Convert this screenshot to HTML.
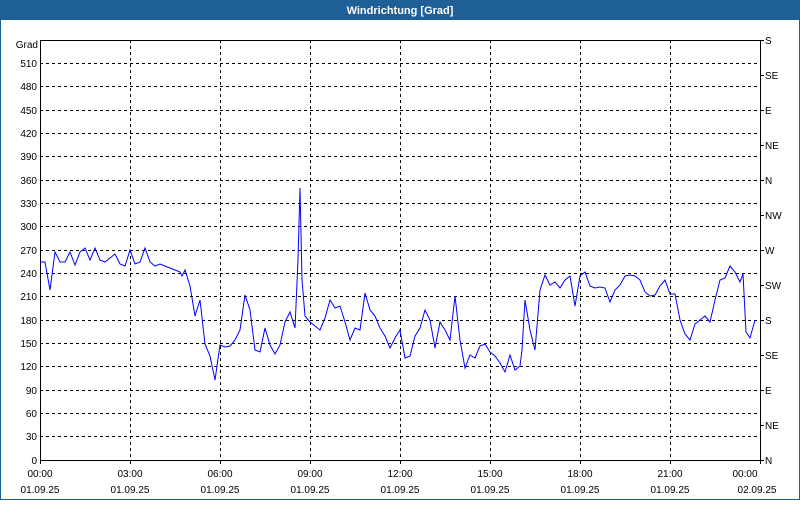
<!DOCTYPE html>
<html><head><meta charset="utf-8"><style>
body{margin:0;width:800px;height:500px;overflow:hidden;background:#fff;font-family:"Liberation Sans",sans-serif}
</style></head><body>
<svg width="800" height="500" xmlns="http://www.w3.org/2000/svg" font-family="Liberation Sans, sans-serif" font-size="10">
<rect x="0" y="0" width="800" height="500" fill="#fff"/>
<rect x="0" y="0" width="800" height="20" fill="#1e6096"/>
<rect x="0.5" y="0.5" width="799" height="499" fill="none" stroke="#1e6096" stroke-width="1"/>
<text x="400" y="14" fill="#fff" font-weight="bold" font-size="11" text-anchor="middle">Windrichtung [Grad]</text>
<g stroke="#000" stroke-dasharray="3,3" stroke-width="1">
<path d="M40 63.5H760M40 86.5H760M40 110.5H760M40 133.5H760M40 156.5H760M40 180.5H760M40 203.5H760M40 226.5H760M40 250.5H760M40 273.5H760M40 296.5H760M40 320.5H760M40 343.5H760M40 366.5H760M40 390.5H760M40 413.5H760M40 436.5H760"/>
<path d="M130.5 40V460M220.5 40V460M310.5 40V460M400.5 40V460M490.5 40V460M580.5 40V460M670.5 40V460"/>
</g>
<rect x="40.5" y="40.5" width="720" height="420" fill="none" stroke="#000"/>
<g stroke="#000"><path d="M130.5 460V464M220.5 460V464M310.5 460V464M400.5 460V464M490.5 460V464M580.5 460V464M670.5 460V464M40.5 460V464M760.5 460V464"/>
<path d="M760 40.5h4M760 75.5h4M760 110.5h4M760 145.5h4M760 180.5h4M760 215.5h4M760 250.5h4M760 285.5h4M760 320.5h4M760 355.5h4M760 390.5h4M760 425.5h4M760 460.5h4"/></g>
<g text-anchor="end">
<text x="38" y="48">Grad</text>
<text x="37" y="67">510</text><text x="37" y="90">480</text><text x="37" y="114">450</text><text x="37" y="137">420</text><text x="37" y="160">390</text><text x="37" y="184">360</text><text x="37" y="207">330</text><text x="37" y="230">300</text><text x="37" y="254">270</text><text x="37" y="277">240</text><text x="37" y="300">210</text><text x="37" y="324">180</text><text x="37" y="347">150</text><text x="37" y="370">120</text><text x="37" y="394">90</text><text x="37" y="417">60</text><text x="37" y="440">30</text><text x="37" y="464">0</text>
</g>
<g>
<text x="765" y="44">S</text><text x="765" y="79">SE</text><text x="765" y="114">E</text><text x="765" y="149">NE</text><text x="765" y="184">N</text><text x="765" y="219">NW</text><text x="765" y="254">W</text><text x="765" y="289">SW</text><text x="765" y="324">S</text><text x="765" y="359">SE</text><text x="765" y="394">E</text><text x="765" y="429">NE</text><text x="765" y="464">N</text>
</g>
<g text-anchor="middle">
<text x="40" y="477">00:00</text><text x="130" y="477">03:00</text><text x="220" y="477">06:00</text><text x="310" y="477">09:00</text><text x="400" y="477">12:00</text><text x="490" y="477">15:00</text><text x="580" y="477">18:00</text><text x="670" y="477">21:00</text><text x="745" y="477">00:00</text>
<text x="40" y="493">01.09.25</text><text x="130" y="493">01.09.25</text><text x="220" y="493">01.09.25</text><text x="310" y="493">01.09.25</text><text x="400" y="493">01.09.25</text><text x="490" y="493">01.09.25</text><text x="580" y="493">01.09.25</text><text x="670" y="493">01.09.25</text><text x="757" y="493">02.09.25</text>
</g>
<polyline fill="none" stroke="#0000ff" stroke-width="1" points="40,262 45,262 50,290 55,252 60,262 65,262 70,252 75,265 80,252 85,248 90,260 95,248 100,260 105,262 110,258 115,254 120,264 125,266 130,250 135,264 140,262 145,248 150,262 155,266 160,264 165,266 170,268 175,270 180,272 182,276 185,270 190,286 195,316 200,300 205,344 210,356 215,380 220,345 225,347 230,346 235,340 240,330 245,295 250,310 255,350 260,352 265,328 270,345 275,354 280,345 285,322 290,312 295,328 298,260 300,188 302,280 305,316 310,322 315,326 320,330 325,318 330,300 335,308 340,306 345,322 350,340 355,328 360,330 365,293 370,310 375,316 380,328 385,336 390,348 395,338 400,330 405,358 410,356 415,336 420,328 425,310 430,320 435,348 440,322 445,330 450,340 455,296 460,340 465,368 470,355 475,358 480,346 485,344 490,352 495,356 500,363 505,372 510,355 515,370 520,366 522,350 525,300 530,330 535,350 540,290 545,275 550,285 555,282 560,288 565,280 570,276 575,306 580,276 585,272 590,286 595,288 600,287 605,288 610,302 615,290 620,285 625,276 630,275 635,276 640,280 645,292 650,296 655,295 660,286 665,280 670,294 675,294 680,320 685,334 690,340 695,324 700,320 705,316 710,322 715,300 720,280 725,278 730,266 735,272 740,282 743,274 746,332 750,338 755,320"/>
</svg>
</body></html>
